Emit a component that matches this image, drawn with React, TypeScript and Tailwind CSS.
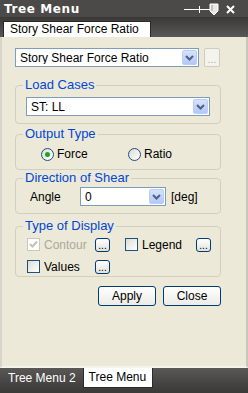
import { ReactNode } from "react";

const font = { fontFamily: '"Liberation Sans", Arial, sans-serif' };

const Chevron = () => (
	<svg width="9" height="6" viewBox="0 0 9 6">
		<path d="M1 1 L4.5 4.5 L8 1" fill="none" stroke="#4d6185" strokeWidth="2" />
	</svg>
);

const Combo = ({ value, className }: { value: string; className: string }) => (
	<div className={`flex items-center bg-white border border-[#7f9db9] ${className}`}>
		<span className="flex-1 pl-[4px] text-[12px] text-black leading-none truncate">{value}</span>
		<div className="flex items-center justify-center w-[15px] h-[calc(100%-2px)] mr-[1px] rounded-[2px] bg-gradient-to-b from-[#d6e2fd] to-[#b4c8f6] border border-[#b9cdf8]">
			<Chevron />
		</div>
	</div>
);

const Dots = ({ disabled }: { disabled?: boolean }) => (
	<div
		className={
			disabled
				? "flex items-end justify-center w-[16px] h-[19px] border border-[#cfccbd] rounded-[2px] bg-[#f4f3ee] text-[#aca899] text-[10px] leading-[13px]"
				: "flex items-end justify-center w-[15px] h-[14px] border border-[#003c74] rounded-[3px] bg-gradient-to-b from-white to-[#e3e2da] text-black text-[10px] leading-[10px]"
		}>
		...
	</div>
);

const Check = ({ checked, disabled }: { checked?: boolean; disabled?: boolean }) => (
	<div
		className={`flex items-center justify-center w-[13px] h-[13px] border ${
			disabled ? "border-[#cac8bb] bg-white" : "border-[#1c5180] bg-gradient-to-br from-[#dcdcd6] to-white"
		}`}>
		{checked && (
			<svg width="9" height="9" viewBox="0 0 9 9">
				<path d="M1 4 L3.5 6.5 L8 1.5" fill="none" stroke="#c5c2b2" strokeWidth="2" />
			</svg>
		)}
	</div>
);

const Radio = ({ checked }: { checked?: boolean }) => (
	<div className="flex items-center justify-center w-[13px] h-[13px] rounded-full border border-[#1c5180] bg-gradient-to-br from-[#dcdcd6] to-white">
		{checked && <div className="w-[5px] h-[5px] rounded-full bg-[#21a121]" />}
	</div>
);

const Group = ({ label, className, children }: { label: string; className: string; children: ReactNode }) => (
	<fieldset className={`border border-[#d0d0bf] rounded-[4px] w-[206px] p-0 ${className}`}>
		<legend className="ml-[7px] px-[2px] text-[#0046d5] text-[13px] leading-[14px]">{label}</legend>
		{children}
	</fieldset>
);

const XpButton = ({ label }: { label: string }) => (
	<div className="flex items-center justify-center w-[58px] h-[20px] border border-[#003c74] rounded-[3px] bg-gradient-to-b from-white to-[#ecebe6] text-[12px] text-black">
		{label}
	</div>
);

export default function App() {
	return (
		<div className="w-[248px] h-[393px] flex flex-col bg-[#4a4947]" style={font}>
			{/* title bar */}
			<div className="h-[18px] flex items-center justify-between bg-[#4b4a48] border-b border-[#3a3937]">
				<span
					className="pl-[4px] text-white text-[12px] font-bold tracking-[0.6px]"
					style={{ fontFamily: '"DejaVu Sans", Verdana, sans-serif' }}>
					Tree Menu
				</span>
				<svg width="60" height="16" viewBox="0 0 60 16" className="mr-[4px]">
					<path d="M0 8.5 H15" stroke="white" strokeWidth="1" />
					<path d="M15.5 5 V12" stroke="white" strokeWidth="1" />
					<path d="M15 8.5 H26" stroke="white" strokeWidth="1" />
					<path d="M26 3 H34 V10 L30 14 L26 10 Z" fill="#e8e8e8" stroke="white" />
					<path d="M28 4 V10" stroke="#9a9a9a" strokeWidth="1" />
					<path d="M43 5 L50 12 M50 5 L43 12" stroke="white" strokeWidth="2" />
				</svg>
			</div>
			{/* tab strip */}
			<div className="h-[19px] flex items-end pl-[3px] bg-gradient-to-b from-[#3c3b39] to-[#5a5856]">
				<div className="h-[16px] w-[148px] bg-white border border-b-0 border-[#2a2a2a] pl-[6px] text-[12px] leading-[15px] text-black">
					Story Shear Force Ratio
				</div>
			</div>
			{/* content */}
			<div className="flex-1 bg-[#ece9d8] border-x-2 border-b-2 border-x-[#c9c7bd] border-b-[#f4f3ee] border-l-[#d8d6cc] pl-[13px] pt-[11px] flex flex-col">
				<div className="flex items-center gap-[5px]">
					<Combo value="Story Shear Force Ratio" className="w-[184px] h-[19px]" />
					<Dots disabled />
				</div>

				<Group label="Load Cases" className="mt-[11px]">
					<div className="pl-[10px] pt-[5px] pb-[7px]">
						<Combo value="ST: LL" className="w-[184px] h-[19px]" />
					</div>
				</Group>

				<Group label="Output Type" className="mt-[3px]">
					<div className="flex items-center h-[14px] text-[12px] text-black pl-[25px] mt-[6px] mb-[8px]">
						<Radio checked />
						<span className="ml-[3px] w-[71px]">Force</span>
						<Radio />
						<span className="ml-[3px]">Ratio</span>
					</div>
				</Group>

				<Group label="Direction of Shear" className="mt-[1px]">
					<div className="flex items-center text-[12px] text-black pl-[14px] pt-[2px] pb-[7px]">
						<span className="w-[50px]">Angle</span>
						<Combo value="0" className="w-[86px] h-[19px]" />
						<span className="ml-[5px]">[deg]</span>
					</div>
				</Group>

				<Group label="Type of Display" className="mt-[5px]">
					<div className="flex flex-col gap-[9px] text-[12px] pl-[11px] pt-[5px] pb-[3px]">
						<div className="flex items-center h-[13px]">
							<Check checked disabled />
							<span className="ml-[4px] w-[51px] text-[#aca899]">Contour</span>
							<Dots />
							<div className="ml-[15px]">
								<Check />
							</div>
							<span className="ml-[4px] w-[54px] text-black">Legend</span>
							<Dots />
						</div>
						<div className="flex items-center h-[13px]">
							<Check />
							<span className="ml-[4px] w-[51px] text-black">Values</span>
							<Dots />
						</div>
					</div>
				</Group>

				<div className="flex justify-end gap-[7px] w-[206px] mt-[9px]">
					<XpButton label="Apply" />
					<XpButton label="Close" />
				</div>
			</div>
			{/* bottom tabs */}
			<div className="h-[25px] flex items-start bg-gradient-to-b from-[#5a5856] to-[#3a3937]">
				<span className="pl-[8px] pr-[7px] pt-[3px] text-white text-[12px] leading-[15px]">Tree Menu 2</span>
				<div className="h-[20px] w-[70px] bg-white border border-t-0 border-[#2a2a2a] pl-[5px] text-[12px] leading-[18px] text-black">
					Tree Menu
				</div>
			</div>
		</div>
	);
}
